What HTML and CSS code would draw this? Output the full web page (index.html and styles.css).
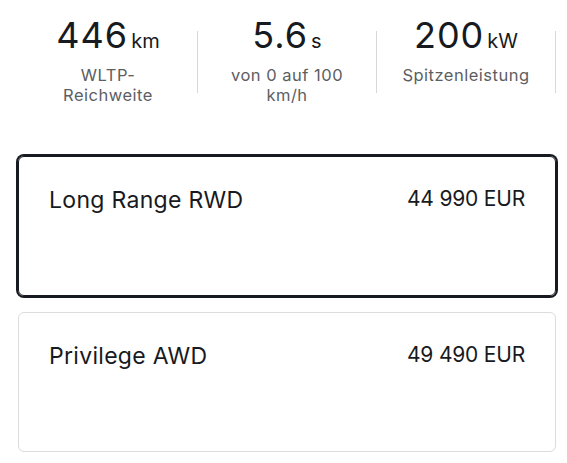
FILE: index.html
```html
<!DOCTYPE html>
<html lang="de">
<head>
    <meta charset="UTF-8">
    <meta name="viewport" content="width=device-width, initial-scale=1.0">
    <title>Modell wählen</title>
    <link rel="stylesheet" href="styles.css">
</head>
<body>

    <div class="page">
        <div class="specs">
            <div class="spec">
                <div class="spec-value">446<span class="unit">km</span></div>
                <div class="spec-label">WLTP-<br>Reichweite</div>
            </div>
            <div class="divider"></div>
            <div class="spec">
                <div class="spec-value">5.6<span class="unit">s</span></div>
                <div class="spec-label">von 0 auf 100<br>km/h</div>
            </div>
            <div class="divider"></div>
            <div class="spec">
                <div class="spec-value">200<span class="unit">kW</span></div>
                <div class="spec-label">Spitzenleistung</div>
            </div>
            <div class="divider"></div>
        </div>

        <div class="trims">
            <div class="trim selected">
                <span class="trim-name">Long Range RWD</span>
                <span class="trim-price">44 990 EUR</span>
            </div>
            <div class="trim">
                <span class="trim-name">Privilege AWD</span>
                <span class="trim-price">49 490 EUR</span>
            </div>
        </div>
    </div>

</body>
</html>
```

FILE: styles.css
```css
body {
    margin: 0;
    background-color: white;
    font-family: Inter, "Noto Sans", sans-serif;
    color: #171a20;
}

.page {
    padding: 15px 11px 0 18px;
}

/* spec row */
.specs {
    display: flex;
    align-items: flex-start;
    padding-left: 1px;
}

.spec {
    width: 178px;
    text-align: center;
}

.spec-value {
    font-size: 36px;
    line-height: 40px;
    letter-spacing: 1px;
}

.unit {
    font-size: 20px;
    margin-left: 3px;
    letter-spacing: 0;
}

.spec-label {
    font-size: 16.5px;
    line-height: 20px;
    letter-spacing: 0.5px;
    color: #5c5e62;
    margin-top: 4px;
}

.divider {
    width: 1px;
    height: 62px;
    margin-top: 16px;
    background-color: #d8d8d8;
}

/* trim cards */
.trims {
    margin-top: 51px;
}

.trim {
    display: flex;
    justify-content: space-between;
    align-items: flex-start;
    height: 138px;
    padding: 0 30px 0 30px;
    border: 1px solid #dcdcdc;
    border-radius: 6px;
    margin-bottom: 16px;
}

.trim.selected {
    border-color: #171a20;
    box-shadow: 0 0 0 2px #171a20;
}

.trim-name {
    font-size: 23px;
    letter-spacing: 0.3px;
    margin-top: 29px;
}

.trim-price {
    font-size: 21px;
    letter-spacing: -0.2px;
    margin-top: 29px;
}
```
